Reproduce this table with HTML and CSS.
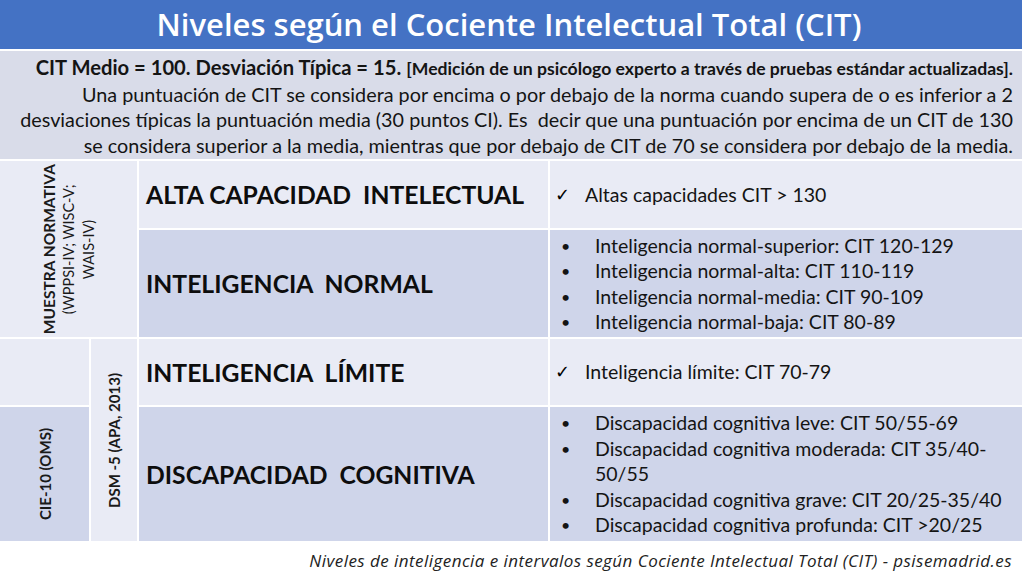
FILE: index.html
```html
<!DOCTYPE html>
<html lang="es">
<head>
<meta charset="utf-8">
<title>Niveles según el Cociente Intelectual Total (CIT)</title>
<link rel="stylesheet" href="styles.css">
</head>
<body>
<div class="page">
  <header class="title">Niveles según el Cociente Intelectual Total (CIT)</header>
  <section class="info">
    <p class="lead"><b>CIT Medio = 100. Desviación Típica = 15.</b> <span class="note">[Medición de un psicólogo experto a través de pruebas estándar actualizadas].</span></p>
    <p>Una puntuación de CIT se considera por encima o por debajo de la norma cuando supera de o es inferior a 2<br>desviaciones típicas la puntuación media (30 puntos CI). Es&nbsp; decir que una puntuación por encima de un CIT de 130<br>se considera superior a la media, mientras que por debajo de CIT de 70 se considera por debajo de la media.</p>
  </section>
  <section class="grid">
    <div class="cell light vlabel muestra"><div class="vtext"><b>MUESTRA NORMATIVA</b><br>(WPPSI-IV; WISC-V;<br>WAIS-IV)</div></div>
    <div class="cell light cat r1">ALTA CAPACIDAD&nbsp; INTELECTUAL</div>
    <div class="cell light det r1"><div class="item check"><span class="mark">✓</span><span>Altas capacidades CIT &gt; 130</span></div></div>
    <div class="cell dark cat r2">INTELIGENCIA&nbsp; NORMAL</div>
    <div class="cell dark det r2">
      <div class="item"><span class="dot">•</span><span>Inteligencia normal-superior: CIT 120-129</span></div>
      <div class="item"><span class="dot">•</span><span>Inteligencia normal-alta: CIT 110-119</span></div>
      <div class="item"><span class="dot">•</span><span>Inteligencia normal-media: CIT 90-109</span></div>
      <div class="item"><span class="dot">•</span><span>Inteligencia normal-baja: CIT 80-89</span></div>
    </div>
    <div class="cell light blank"></div>
    <div class="cell light vlabel dsm"><div class="vtext"><b>DSM -5 (APA, 2013)</b></div></div>
    <div class="cell light cat r3">INTELIGENCIA&nbsp; LÍMITE</div>
    <div class="cell light det r3"><div class="item check"><span class="mark">✓</span><span>Inteligencia límite: CIT 70-79</span></div></div>
    <div class="cell dark vlabel cie"><div class="vtext"><b>CIE-10 (OMS)</b></div></div>
    <div class="cell dark cat r4">DISCAPACIDAD&nbsp; COGNITIVA</div>
    <div class="cell dark det r4">
      <div class="item"><span class="dot">•</span><span>Discapacidad cognitiva leve: CIT 50/55-69</span></div>
      <div class="item"><span class="dot">•</span><span>Discapacidad cognitiva moderada: CIT 35/40-<br>50/55</span></div>
      <div class="item"><span class="dot">•</span><span>Discapacidad cognitiva grave: CIT 20/25-35/40</span></div>
      <div class="item"><span class="dot">•</span><span>Discapacidad cognitiva profunda: CIT &gt;20/25</span></div>
    </div>
  </section>
  <footer class="caption">Niveles de inteligencia e intervalos según Cociente Intelectual Total (CIT) - psisemadrid.es</footer>
</div>
</body>
</html>
```
FILE: styles.css
```css
html, body {
  margin: 0;
  padding: 0;
  background: #ffffff;
}
body {
  font-family: "Lato", "Liberation Sans", sans-serif;
  color: #111111;
  width: 1024px;
  height: 576px;
  overflow: hidden;
}
.page {
  width: 1022px;
  display: flex;
  flex-direction: column;
}
.title {
  height: 49px;
  background: #4472c4;
  color: #ffffff;
  font-family: "Open Sans", "Liberation Sans", sans-serif;
  font-weight: 600;
  font-size: 31px;
  line-height: 49px;
  text-align: center;
  padding-right: 4px;
}
.info {
  margin-top: 2px;
  height: 108px;
  background: #d9dce9;
  text-align: right;
  padding: 4px 9px 0 0;
  box-sizing: border-box;
  font-size: 19.8px;
  line-height: 25.5px;
  color: #141414;
}
.info p {
  margin: 0;
}
.lead b {
  font-size: 20.2px;
  font-weight: 700;
}
.note {
  font-weight: 700;
  font-size: 17.6px;
}
.grid {
  margin-top: 2px;
  display: grid;
  grid-template-columns: 89px 46px 409px 1fr;
  grid-template-rows: 67px 107px 66px 134px;
  gap: 2px;
}
.cell {
  box-sizing: border-box;
}
.light { background: #e9ebf5; }
.dark { background: #cfd5ea; }
.vlabel {
  display: flex;
  align-items: center;
  justify-content: center;
}
.vtext {
  writing-mode: vertical-rl;
  transform: rotate(180deg);
  text-align: center;
  font-size: 14.5px;
  line-height: 20px;
  color: #1a1a1a;
}
.vtext b {
  font-size: 15.5px;
}
.muestra { grid-column: 1 / 3; grid-row: 1 / 3; }
.blank { grid-column: 1; grid-row: 3; }
.dsm { grid-column: 2; grid-row: 3 / 5; }
.dsm .vtext b { font-size: 15px; }
.cie { grid-column: 1; grid-row: 4; }
.cie .vtext b { font-size: 15px; }
.cat {
  grid-column: 3;
  display: flex;
  align-items: center;
  padding-left: 7px;
  font-weight: 700;
  font-size: 24.7px;
  color: #0d0d0d;
}
.det {
  grid-column: 4;
  display: flex;
  flex-direction: column;
  justify-content: center;
  padding-left: 11px;
  font-size: 19.5px;
  line-height: 25.5px;
  color: #141414;
}
.r1 { grid-row: 1; }
.r2 { grid-row: 2; }
.r3 { grid-row: 3; }
.r4 { grid-row: 4; }
.item {
  display: flex;
  align-items: flex-start;
}
.dot {
  width: 34px;
  flex: none;
  font-size: 16px;
}
.check {
  margin-left: -6px;
}
.mark {
  width: 30px;
  flex: none;
  font-family: "DejaVu Sans", sans-serif;
  font-size: 18px;
  color: #000000;
}
.caption {
  margin-top: 9px;
  text-align: right;
  padding-right: 10px;
  font-family: "Open Sans", "Liberation Sans", sans-serif;
  font-style: italic;
  font-size: 17px;
  letter-spacing: 0.45px;
  line-height: 22px;
  color: #222222;
}
```
